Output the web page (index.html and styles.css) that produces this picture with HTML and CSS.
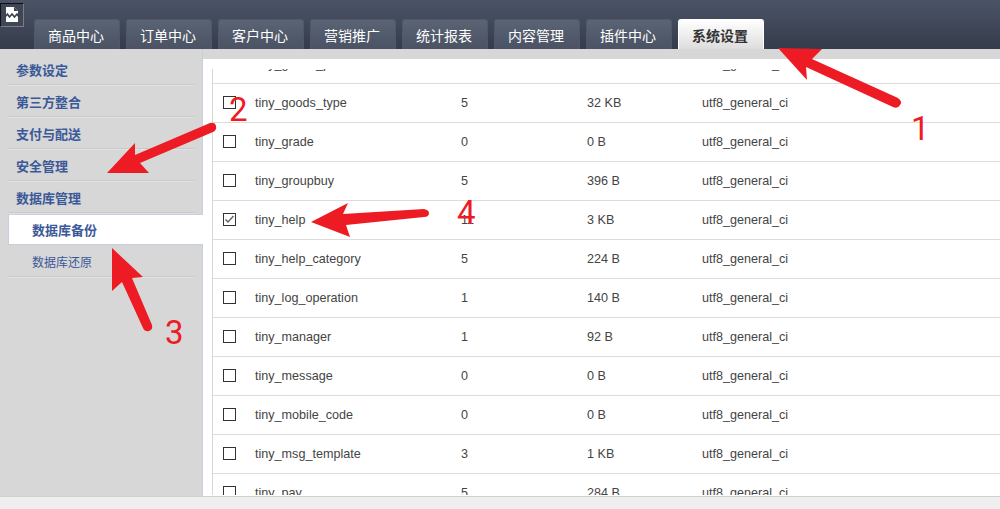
FILE: index.html
```html
<!DOCTYPE html>
<html lang="zh">
<head>
<meta charset="utf-8">
<title>系统设置</title>
<link rel="stylesheet" href="styles.css">
</head>
<body>
<header class="top">
  <div class="logo">
    <svg width="14" height="16" viewBox="0 0 14 16"><path fill="#fff" d="M1 0H9L13 4V15H1Z"/><path fill="none" stroke="#39404f" stroke-width="1.6" d="M0 10L2.500 7L4.500 10L7 7L9.500 10L12 7L14 10"/><path fill="#39404f" d="M9 0L13 4H9Z"/></svg>
  </div>
  <nav class="tabs">
    <a class="tab">商品中心</a>
    <a class="tab">订单中心</a>
    <a class="tab">客户中心</a>
    <a class="tab">营销推广</a>
    <a class="tab">统计报表</a>
    <a class="tab">内容管理</a>
    <a class="tab">插件中心</a>
    <a class="tab active">系统设置</a>
  </nav>
</header>
<div class="body">
  <aside class="side">
    <div class="group">参数设定</div>
    <div class="group">第三方整合</div>
    <div class="group">支付与配送</div>
    <div class="group">安全管理</div>
    <div class="group">数据库管理</div>
    <div class="sub current">数据库备份</div>
    <div class="sub">数据库还原</div>
  </aside>
  <main class="main">
    <div class="scroll">
      <table class="list">
        <colgroup><col class="c1"><col class="c2"><col class="c3"><col class="c4"><col></colgroup>
        <tr><td><span class="check"></span></td><td>tiny_goods_photo</td><td>5</td><td>1 KB</td><td>utf8_general_ci</td></tr>
        <tr><td><span class="check"></span></td><td>tiny_goods_type</td><td>5</td><td>32 KB</td><td>utf8_general_ci</td></tr>
        <tr><td><span class="check"></span></td><td>tiny_grade</td><td>0</td><td>0 B</td><td>utf8_general_ci</td></tr>
        <tr><td><span class="check"></span></td><td>tiny_groupbuy</td><td>5</td><td>396 B</td><td>utf8_general_ci</td></tr>
        <tr><td><span class="check"><svg width="11" height="11" viewBox="0 0 11 11"><path fill="none" stroke="#666" stroke-width="1.500" d="M1.500 5.500L4 8L9.500 2"/></svg></span></td><td>tiny_help</td><td>11</td><td>3 KB</td><td>utf8_general_ci</td></tr>
        <tr><td><span class="check"></span></td><td>tiny_help_category</td><td>5</td><td>224 B</td><td>utf8_general_ci</td></tr>
        <tr><td><span class="check"></span></td><td>tiny_log_operation</td><td>1</td><td>140 B</td><td>utf8_general_ci</td></tr>
        <tr><td><span class="check"></span></td><td>tiny_manager</td><td>1</td><td>92 B</td><td>utf8_general_ci</td></tr>
        <tr><td><span class="check"></span></td><td>tiny_message</td><td>0</td><td>0 B</td><td>utf8_general_ci</td></tr>
        <tr><td><span class="check"></span></td><td>tiny_mobile_code</td><td>0</td><td>0 B</td><td>utf8_general_ci</td></tr>
        <tr><td><span class="check"></span></td><td>tiny_msg_template</td><td>3</td><td>1 KB</td><td>utf8_general_ci</td></tr>
        <tr><td><span class="check"></span></td><td>tiny_pay</td><td>5</td><td>284 B</td><td>utf8_general_ci</td></tr>
      </table>
    </div>
  </main>
</div>
<footer class="foot"></footer>
<svg class="arrows" width="1000" height="509" viewBox="0 0 1000 509">
  <g fill="#ed1c24">
    <path d="M778 48L822 49L812 59L898 98Q903 102 900 105Q898 109 893 107L806 67L807 80Z"/>
    <path d="M107 173L135 143L135 155L210 123Q215 122 216 126Q217 130 213 132L140 163L149 173Z"/>
    <path d="M112 248L143 277L132 278L152 325Q153 330 149 331Q145 332 143 328L122 282L112 291Z"/>
    <path d="M311 222L348 203L343 214L424 209Q429 210 429 213Q429 217 424 217L346 225L350 237Z"/>
  </g>
</svg>
<span class="num n1">1</span>
<span class="num n2">2</span>
<span class="num n3">3</span>
<span class="num n4">4</span>
</body>
</html>
```
FILE: styles.css
```css
* { box-sizing: border-box; }
html, body { margin: 0; height: 100%; }
body {
  position: relative;
  display: flex;
  flex-direction: column;
  overflow: hidden;
  font-family: "Liberation Sans", "Noto Sans CJK SC", sans-serif;
  font-size: 12.6px;
  color: #444;
  background: #efefef;
}
.top {
  flex: none;
  height: 49px;
  position: relative;
  display: flex;
  align-items: flex-end;
  padding-left: 34px;
  background: linear-gradient(#4b5467, #343b4b);
}
.logo {
  position: absolute;
  left: 0;
  top: 3px;
  width: 24px;
  height: 24px;
  display: flex;
  align-items: center;
  justify-content: center;
  background: #3f4656;
  border-top: 1px solid #111;
  border-left: 1px solid #111;
  border-right: 1px solid #7d7d7d;
  border-bottom: 1px solid #7d7d7d;
}
.tabs { display: flex; gap: 6px; }
.tab {
  width: 86px;
  height: 30px;
  padding: 8px 2px 0 0;
  text-align: center;
  font-size: 14px;
  line-height: 17px;
  color: #fff;
  background: linear-gradient(#5a6474, #4a5263);
  border: 1px solid #4f5868;
  border-bottom: 0;
  border-radius: 3px 3px 0 0;
}
.tab.active {
  color: #333;
  font-weight: bold;
  background: linear-gradient(#fff, #ddd);
  border-color: #fff;
}
.body { flex: none; height: 447px; display: flex; background: #d7d7d7; }
.side { flex: none; width: 203px; padding: 4px 0 0 8px; border-right: 1px solid #c5cfe0; }
.group {
  width: 187px;
  height: 32px;
  padding: 5px 0 0 8px;
  font-size: 13px;
  font-weight: bold;
  line-height: 26px;
  color: #3b5998;
  border-bottom: 1px solid #c9c9c9;
  box-shadow: 0 1px 0 #e2e2e2;
}
.sub {
  width: 187px;
  height: 32px;
  padding: 6px 0 0 24px;
  font-size: 12px;
  line-height: 25px;
  color: #3b5998;
  border-bottom: 1px solid #c9c9c9;
  box-shadow: 0 1px 0 #e2e2e2;
}
.sub.current {
  width: 195px;
  height: 31px;
  margin-top: 1px;
  padding: 3px 0 0 23px;
  font-size: 13px;
  font-weight: bold;
  background: #fff;
  border: 1px solid #c5cfe0;
  border-right: 0;
  box-shadow: none;
}
.main { flex: 1; margin-top: 10px; padding: 10px 0 1px 9px; background: #fff; min-width: 0; }
.scroll { height: 100%; overflow: hidden; border-left: 1px solid #d7d7d7; }
.list {
  width: 100%;
  margin-top: -25px;
  border-collapse: collapse;
  table-layout: fixed;
}
.list td {
  height: 39px;
  padding: 1px 0 0;
  border-bottom: 1px solid #dcdcdc;
  white-space: nowrap;
}
.c1 { width: 42px; }
.c2 { width: 206px; }
.c3 { width: 126px; }
.c4 { width: 115px; }
.check {
  display: block;
  width: 13px;
  height: 13px;
  margin: -2px 0 0 10px;
  background: #fff;
  border: 1px solid #333;
}
.check svg { display: block; }
.arrows { position: absolute; left: 0; top: 0; pointer-events: none; }
.num {
  position: absolute;
  font-family: Roboto, "Liberation Sans", sans-serif;
  font-weight: 400;
  font-size: 33px;
  line-height: 33px;
  color: #ed1c24;
}
.n1 { left: 911px; top: 112px; }
.n2 { left: 229px; top: 93px; }
.n3 { left: 165px; top: 316px; }
.n4 { left: 457px; top: 196px; }
.foot { flex: 1; border-top: 1px solid #cfcfcf; background: #efefef; }
```
